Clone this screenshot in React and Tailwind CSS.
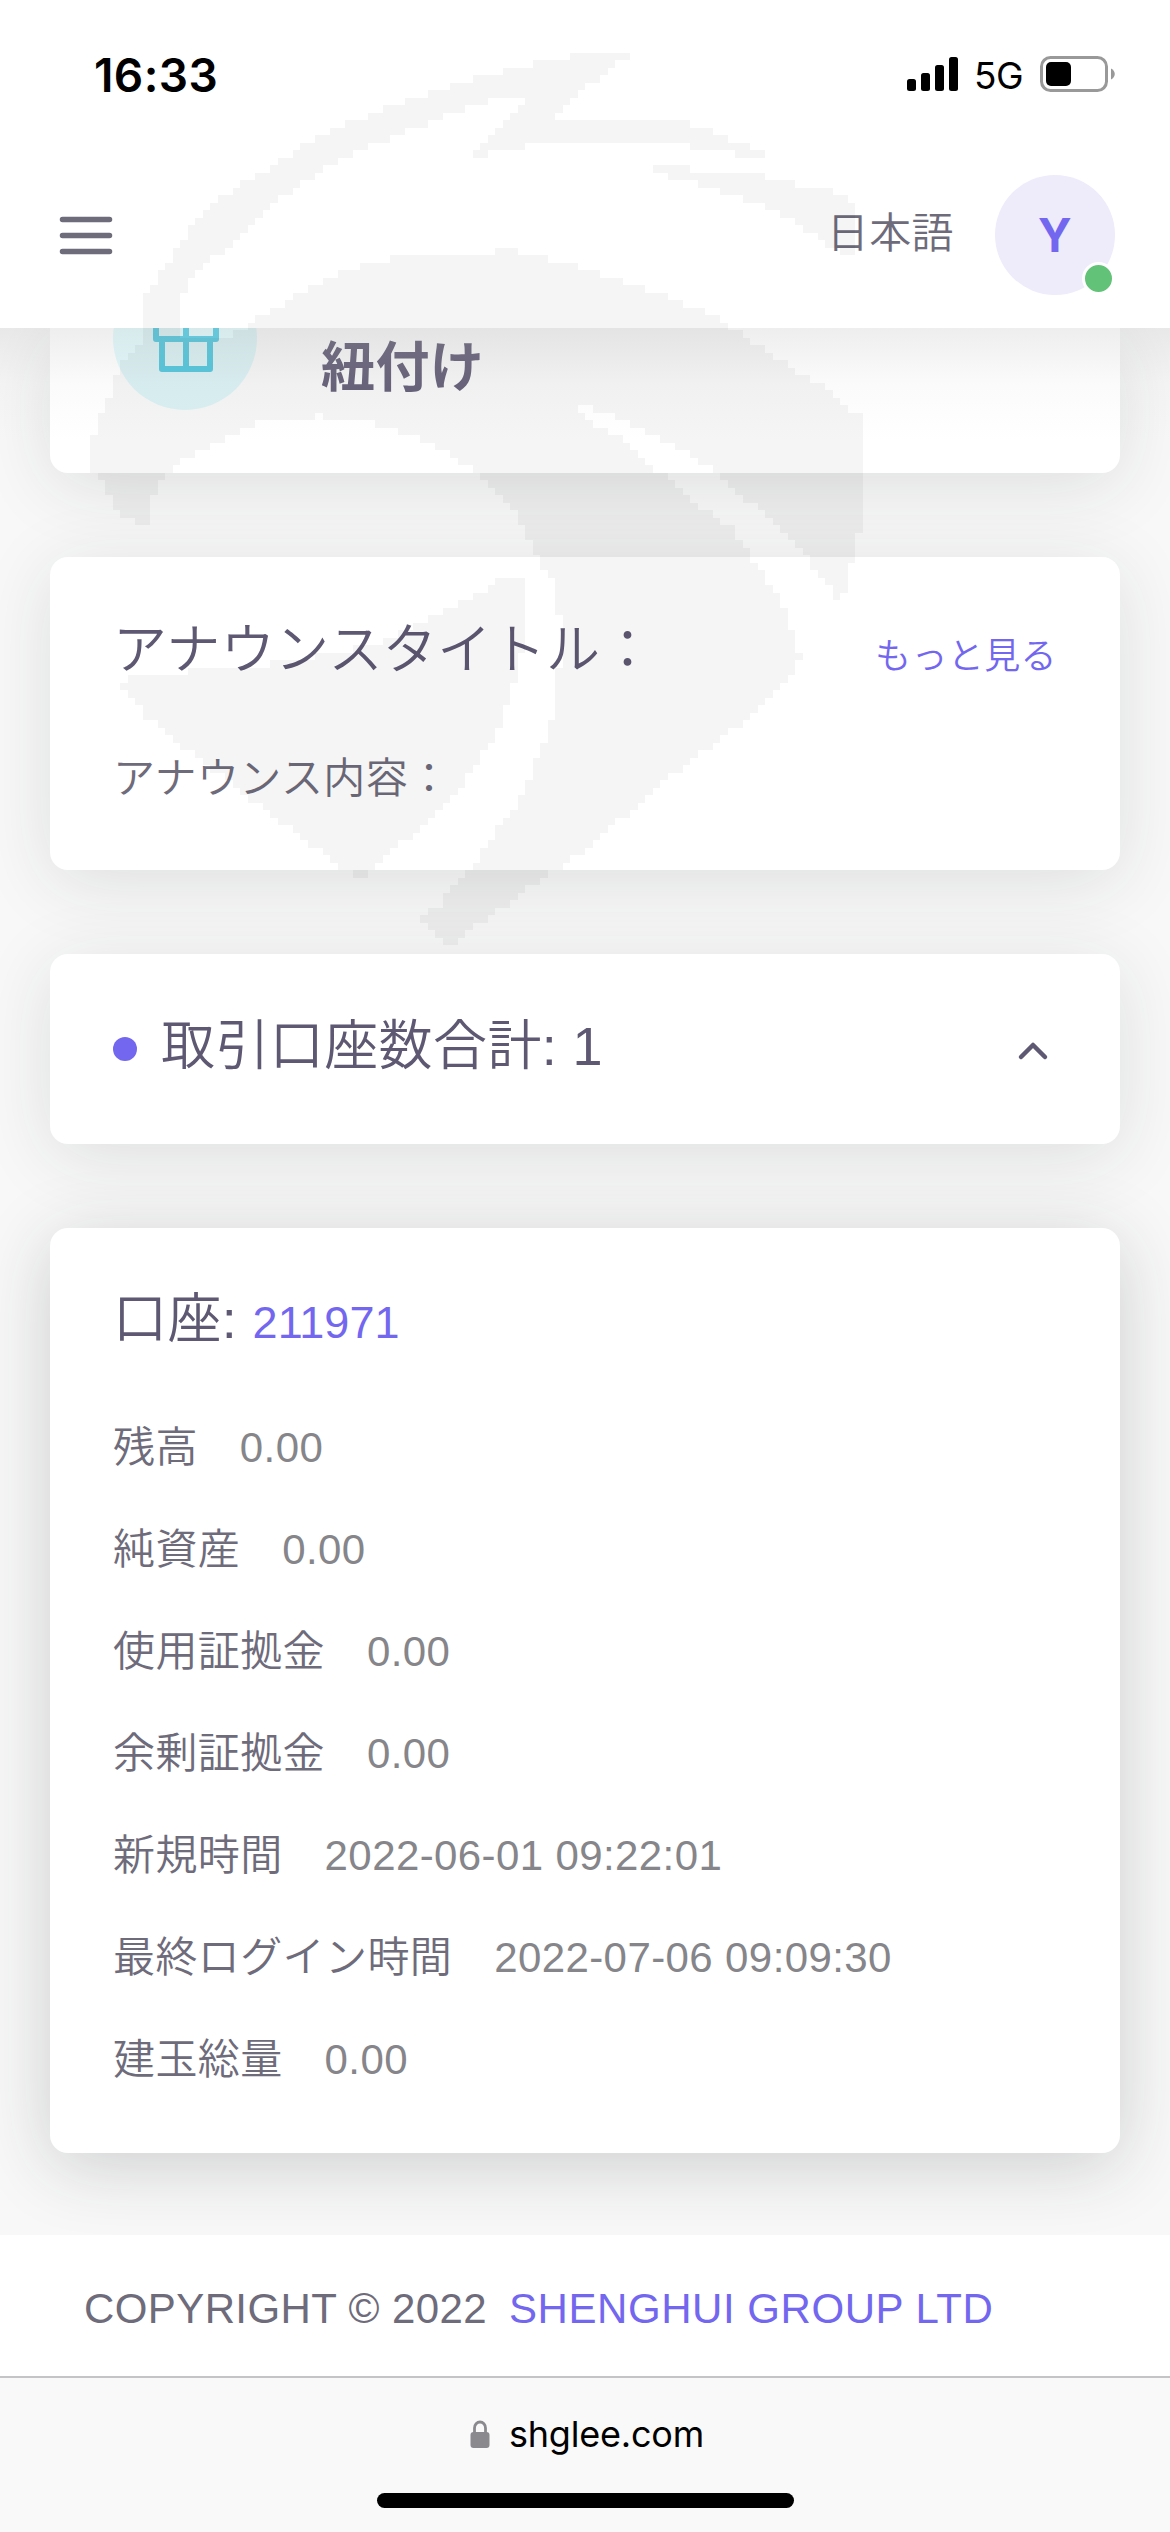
import clsx from "clsx";

const WATERMARK_CELL = 7.5;

const watermarkShapes = [
  // crest
  [[142, 330], [142, 298], [155, 280], [170, 260], [187, 235], [200, 215], [225, 195], [262, 172], [300, 147], [340, 125], [400, 103], [465, 80], [540, 62], [585, 54], [632, 54], [605, 72], [590, 84], [570, 100], [557, 118], [590, 117], [675, 120], [715, 133], [745, 145], [772, 155], [745, 155], [700, 147], [640, 140], [590, 140], [540, 143], [510, 150], [471, 156], [490, 137], [505, 120], [522, 106], [530, 98], [490, 99], [440, 118], [410, 130], [350, 155], [300, 183], [260, 215], [225, 248], [200, 270], [183, 290], [178, 300], [178, 330], [186, 340], [220, 340], [246, 327], [276, 307], [310, 287], [354, 267], [422, 252], [515, 251], [556, 260], [585, 268], [622, 280], [660, 293], [708, 313], [734, 330], [779, 360], [824, 387], [865, 420], [860, 480], [859, 530], [850, 570], [841, 603], [809, 560], [764, 515], [742, 495], [700, 461], [662, 439], [624, 420], [578, 404], [582, 417], [622, 440], [655, 468], [690, 500], [734, 530], [753, 560], [775, 590], [790, 623], [800, 657], [790, 677], [753, 713], [678, 770], [585, 850], [541, 880], [493, 913], [451, 945], [429, 930], [418, 920], [440, 903], [481, 853], [519, 800], [541, 747], [558, 697], [560, 620], [552, 580], [537, 557], [522, 523], [493, 490], [473, 470], [447, 452], [413, 437], [367, 420], [323, 416], [267, 418], [230, 435], [205, 447], [172, 467], [150, 500], [150, 528], [130, 520], [112, 505], [102, 485], [92, 467], [92, 443], [100, 415], [112, 390], [120, 367], [138, 348]],
  // upper feather
  [[640, 163], [697, 170], [745, 172], [779, 180], [842, 193], [852, 207], [859, 258], [846, 257], [824, 243], [786, 217], [749, 200], [690, 182], [660, 173]],
  // lower beak
  [[522, 580], [509, 573], [478, 593], [433, 617], [373, 645], [325, 655], [239, 668], [127, 675], [120, 687], [149, 720], [201, 760], [261, 807], [317, 850], [358, 878], [381, 863], [429, 817], [466, 780], [496, 733], [515, 680], [522, 647]],
];

// Turns a polygon into a blocky path, one run of cells per row
function toBlocks(points) {
  const cell = WATERMARK_CELL;
  const snap = (v) => Math.round(v / cell) * cell;
  let d = "";
  for (let y = 45; y < 960; y += cell) {
    const mid = y + cell / 2;
    const hits = [];
    points.forEach(([x1, y1], i) => {
      const [x2, y2] = points[(i + 1) % points.length];
      if (y1 > mid !== y2 > mid) {
        hits.push(x1 + ((mid - y1) * (x2 - x1)) / (y2 - y1));
      }
    });
    hits.sort((a, b) => a - b);
    for (let i = 0; i + 1 < hits.length; i += 2) {
      const from = snap(hits[i]);
      const to = snap(hits[i + 1]);
      if (to > from) d += `M${from} ${y}H${to}V${y + cell}H${from}Z`;
    }
  }
  return d;
}

const watermarkPath = watermarkShapes.map(toBlocks).join("");

const accountRows = [
  { label: "残高", value: "0.00" },
  { label: "純資産", value: "0.00" },
  { label: "使用証拠金", value: "0.00" },
  { label: "余剰証拠金", value: "0.00" },
  { label: "新規時間", value: "2022-06-01 09:22:01" },
  { label: "最終ログイン時間", value: "2022-07-06 09:09:30" },
  { label: "建玉総量", value: "0.00" },
];

function Watermark() {
  return (
    <svg
      className="pointer-events-none absolute left-0 top-0 z-30"
      width="1170"
      height="960"
      viewBox="0 0 1170 960"
    >
      <path d={watermarkPath} fill="#000" fillOpacity="0.038" shapeRendering="crispEdges" />
    </svg>
  );
}

function StatusBar() {
  return (
    <div className="flex h-[142px] items-center justify-between pl-[94px] pr-[55px] pt-1.5 text-black">
      <span className="pt-0.5 font-['Inter',sans-serif] text-[46px] font-semibold leading-none">16:33</span>
      <div className="flex items-center">
        <svg width="52" height="34" viewBox="0 0 52 34">
          <rect x="0" y="22" width="9" height="12" rx="2.5" />
          <rect x="14" y="16" width="9" height="18" rx="2.5" />
          <rect x="28" y="8" width="9" height="26" rx="2.5" />
          <rect x="42" y="0" width="9" height="34" rx="2.5" />
        </svg>
        <span className="ml-[15px] w-[50px] pt-0.5 font-['Inter',sans-serif] text-[37px] leading-none tracking-[-0.5px]">5G</span>
        <svg className="ml-[16px]" width="75" height="36" viewBox="0 0 75 36">
          <rect x="1.5" y="1.5" width="65" height="33" rx="9" fill="none" stroke="#999" strokeWidth="3" />
          <rect x="6" y="6" width="25" height="24" rx="5" />
          <path d="M71 12.500c5 2.500 5 8.500 0 11z" fill="#999" />
        </svg>
      </div>
    </div>
  );
}

function Navbar() {
  return (
    <div className="flex h-[186px] items-center justify-between pl-[58px] pr-[55px]">
      <svg width="56" height="44" viewBox="0 0 56 44" fill="none" stroke="#6e6b7b" strokeWidth="5.5" strokeLinecap="round">
        <path d="M4.500 6.500h47M4.500 22.500h47M4.500 38.500h47" />
      </svg>
      <div className="flex items-center">
        <span className="mr-[41px] pb-0.5 text-[42px] font-[350] leading-none text-[#6e6b7b]">日本語</span>
        <div className="relative flex size-[120px] items-center justify-center rounded-full bg-[#eeebfa]">
          <span className="font-['Inter',sans-serif] text-[46px] font-bold leading-none text-[#7367f0]">Y</span>
          <span className="absolute bottom-0 right-0 size-[33px] rounded-full border-[3px] border-white bg-[#62c277]" />
        </div>
      </div>
    </div>
  );
}

function Card({ className, children }) {
  return (
    <section
      className={clsx(
        "rounded-[18px] bg-white px-[63px]",
        className
      )}
    >
      {children}
    </section>
  );
}

function GiftBadge() {
  return (
    <div className="flex size-36 shrink-0 items-center justify-center rounded-full bg-[#00cfe8]/12">
      <svg
        width="72"
        height="72"
        viewBox="0 0 24 24"
        fill="none"
        stroke="#48c9e2"
        strokeWidth="2"
        strokeLinejoin="round"
        className="ml-0.5 mt-0.5"
      >
        <path d="M20 12v10H4V12M2 7h20v5H2zM12 22V7M12 7H7.500a2.500 2.500 0 1 1 0-5C11 2 12 7 12 7zM12 7h4.500a2.500 2.500 0 1 0 0-5C13 2 12 7 12 7z" />
      </svg>
    </div>
  );
}

export default function App() {
  return (
    <div className="relative flex h-[2532px] w-[1170px] flex-col overflow-hidden bg-[#f8f8f8] font-['Liberation_Sans','Noto_Sans_CJK_JP',sans-serif] tracking-[0.4px]">
      <Watermark />

      <header className="relative z-20 h-[328px] shrink-0 bg-white">
        <StatusBar />
        <Navbar />
        {/* scroll fade under the navbar */}
        <div className="absolute inset-x-0 top-full h-[112px] bg-linear-to-b from-[#c0c0c0]/27 via-[#dcdcdc]/12 to-transparent" />
      </header>

      <main className="flex flex-1 flex-col gap-[84px] px-[50px]">
        <Card className="flex h-[145px] items-end rounded-t-none pb-[63px] shadow-[0_12px_72px_rgba(34,41,47,0.12)]">
          <GiftBadge />
          <h2 className="ml-[64px] pb-[15px] text-[54px] font-bold leading-none text-[#5e5873]">紐付け</h2>
        </Card>

        <Card className="h-[313px] pt-[59px] font-[350] shadow-[0_12px_72px_rgba(34,41,47,0.12)]">
          <div className="flex items-center justify-between">
            <h2 className="text-[54px] leading-[54px] text-[#5e5873]">アナウンスタイトル：</h2>
            <a className="pt-3.5 text-[36px] leading-[54px] text-[#7367f0]">もっと見る</a>
          </div>
          <p className="mt-[63px] text-[42px] leading-[63px] text-[#6e6b7b]">アナウンス内容：</p>
        </Card>

        <Card className="flex h-[190px] items-center justify-between shadow-[0_12px_72px_rgba(34,41,47,0.12)]">
          <div className="flex items-center">
            <span className="size-[24px] rounded-full bg-[#7367f0]" />
            <h2 className="ml-[24px] pb-1.5 text-[54px] font-[350] leading-none text-[#5e5873]">取引口座数合計: 1</h2>
          </div>
          <svg
            className="mr-2 mt-1"
            width="32"
            height="22"
            viewBox="0 0 32 22"
            fill="none"
            stroke="#5e5873"
            strokeWidth="4.500"
            strokeLinecap="round"
            strokeLinejoin="round"
          >
            <path d="M4 17 16 5l12 12" />
          </svg>
        </Card>

        <Card className="h-[925px] pt-[58px] shadow-[0_12px_72px_rgba(34,41,47,0.2)]">
          <h2 className="text-[54px] font-[350] leading-[66px] text-[#5e5873]">
            口座: <span className="text-[45px] tracking-normal text-[#7367f0]">211971</span>
          </h2>
          <ul className="mt-[41px] text-[42px] leading-[102px]">
            {accountRows.map((row) => (
              <li key={row.label} className="flex h-[102px] gap-[42px]">
                <span className="font-[350] text-[#6e6b7b]">{row.label}</span>
                <span className="text-[#85858a]">{row.value}</span>
              </li>
            ))}
          </ul>
        </Card>
      </main>

      <footer className="relative z-10 flex h-[141px] shrink-0 items-center gap-[22px] bg-white px-[84px] pt-1.5 text-[42px] leading-none text-[#6e6b7b]">
        <span>COPYRIGHT © 2022</span>
        <a className="tracking-[0.55px] text-[#7367f0]">SHENGHUI GROUP LTD</a>
      </footer>

      <div className="relative z-10 flex h-[156px] shrink-0 flex-col items-center justify-between border-t-2 border-[#c4c4c6] bg-[#f9f9f9] pb-6 pt-[36px]">
        <div className="flex items-center gap-[19px] pl-1">
          <svg width="20" height="28" viewBox="0 0 20 28">
            <path d="M4.500 13V8a5.500 6 0 0 1 11 0v5" fill="none" stroke="#8a8a8e" strokeWidth="2.800" />
            <rect x="0.500" y="12" width="19" height="16" rx="3" fill="#8a8a8e" />
          </svg>
          <span className="font-['Inter',sans-serif] text-[36px] leading-[40px] tracking-[-0.2px] text-black">shglee.com</span>
        </div>
        <div className="h-[15px] w-[417px] rounded-full bg-black" />
      </div>
    </div>
  );
}
